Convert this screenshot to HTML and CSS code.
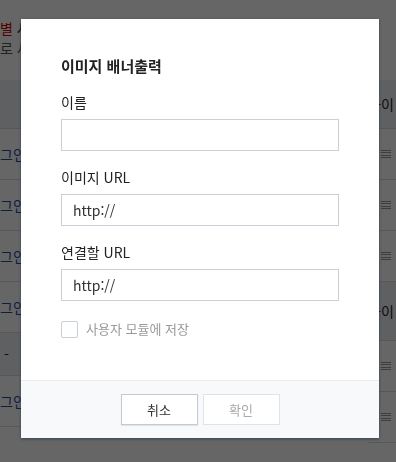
FILE: index.html
```html
<!DOCTYPE html>
<html lang="ko">
<head>
  <meta charset="UTF-8" />
  <title>이미지 배너출력</title>
  <link rel="stylesheet" href="styles.css">
</head>
<body>

  <div class="page">
    <div class="col col-left">
      <div class="intro">
        <p><span class="red">별</span> 사용</p>
        <p class="sub">로 사용</p>
      </div>
      <div class="row head"></div>
      <div class="row"><a>그인</a></div>
      <div class="row"><a>그인</a></div>
      <div class="row"><a>그인</a></div>
      <div class="row"><a>그인</a></div>
      <div class="row head dash">-</div>
      <div class="row"><a>그인</a></div>
    </div>
    <div class="col col-right">
      <div class="intro"></div>
      <div class="row head">나이</div>
      <div class="row"><span class="menu"></span></div>
      <div class="row"><span class="menu"></span></div>
      <div class="row"><span class="menu"></span></div>
      <div class="row head tall">나이</div>
      <div class="row"><span class="menu"></span></div>
      <div class="row"><span class="menu"></span></div>
    </div>
  </div>

  <div class="overlay"></div>

  <div class="modal">
    <div class="modal-body">
      <h2>이미지 배너출력</h2>

      <label for="name">이름</label>
      <input type="text" id="name" />

      <label for="imgUrl">이미지 URL</label>
      <input type="text" id="imgUrl" value="http://" />

      <label for="linkUrl">연결할 URL</label>
      <input type="text" id="linkUrl" value="http://" />

      <label class="check"><span class="box"></span>사용자 모듈에 저장</label>
    </div>
    <div class="modal-foot">
      <button class="btn">취소</button>
      <button class="btn disabled">확인</button>
    </div>
  </div>

</body>
</html>
```

FILE: styles.css
```css
body {
  margin: 0;
  font-family: "Noto Sans CJK KR", "Noto Sans", sans-serif;
  background: #fff;
  color: #222;
  height: 462px;
  overflow: hidden;
}
.page {
  display: flex;
  justify-content: space-between;
}
.col-left {
  width: 60px;
}
.col-right {
  width: 28px;
}
.intro {
  height: 80px;
  font-size: 14px;
}
.intro p {
  margin: 0;
  padding-top: 18px;
  line-height: 20px;
  color: #222;
}
.intro p.sub {
  padding-top: 0;
  color: #555;
}
.red {
  color: #c00;
}
.row {
  height: 50px;
  border-bottom: 1px solid #ddd;
  display: flex;
  align-items: center;
  font-size: 14px;
  white-space: nowrap;
}
.row a {
  color: #1c4e9c;
}
.head {
  background: #eef1f4;
  height: 48px;
}
.dash {
  height: 42px;
  padding-left: 4px;
}
.tall {
  height: 58px;
}
.menu {
  margin-left: 13px;
  width: 10px;
  height: 8px;
  background: repeating-linear-gradient(#999 0 1px, transparent 1px 2.34px);
}
.overlay {
  position: fixed;
  inset: 0;
  background: rgba(0, 0, 0, 0.6);
}
.modal {
  position: fixed;
  left: 21px;
  top: 19px;
  width: 358px;
  background: #fff;
  box-shadow: 0 1px 3px rgba(20, 40, 70, 0.6);
}
.modal-body {
  padding: 33px 40px 0;
  height: 361px;
  box-sizing: border-box;
}
h2 {
  margin: 0 0 11px;
  font-size: 15px;
  font-weight: bold;
  line-height: 28px;
  color: #222;
}
label {
  display: block;
  font-size: 14px;
  line-height: 22px;
  margin-bottom: 6px;
}
input {
  display: block;
  box-sizing: border-box;
  width: 278px;
  height: 32px;
  margin: 0 0 15px;
  padding: 0 11px;
  border: 1px solid #c8d0da;
  border-radius: 0;
  font-family: inherit;
  font-size: 14px;
  color: #333;
}
label.check {
  display: flex;
  align-items: center;
  gap: 8px;
  color: #999;
  font-size: 13px;
  margin: 0;
  padding-top: 2px;
}
.box {
  width: 15px;
  height: 15px;
  border: 1px solid #c8d0da;
  border-radius: 2px;
  background: #fff;
}
.modal-foot {
  background: #f8f9fb;
  border-top: 1px solid #e8ebef;
  height: 57px;
  display: flex;
  justify-content: center;
  align-items: center;
  gap: 5px;
}
.btn {
  width: 77px;
  height: 31px;
  background: #fff;
  border: 1px solid #c3cad3;
  box-shadow: 0 1px 1px rgba(0, 0, 0, 0.08);
  font-family: inherit;
  font-size: 13px;
  color: #333;
}
.btn.disabled {
  border-color: #e0e4e9;
  box-shadow: none;
  color: #aaa;
}
```
